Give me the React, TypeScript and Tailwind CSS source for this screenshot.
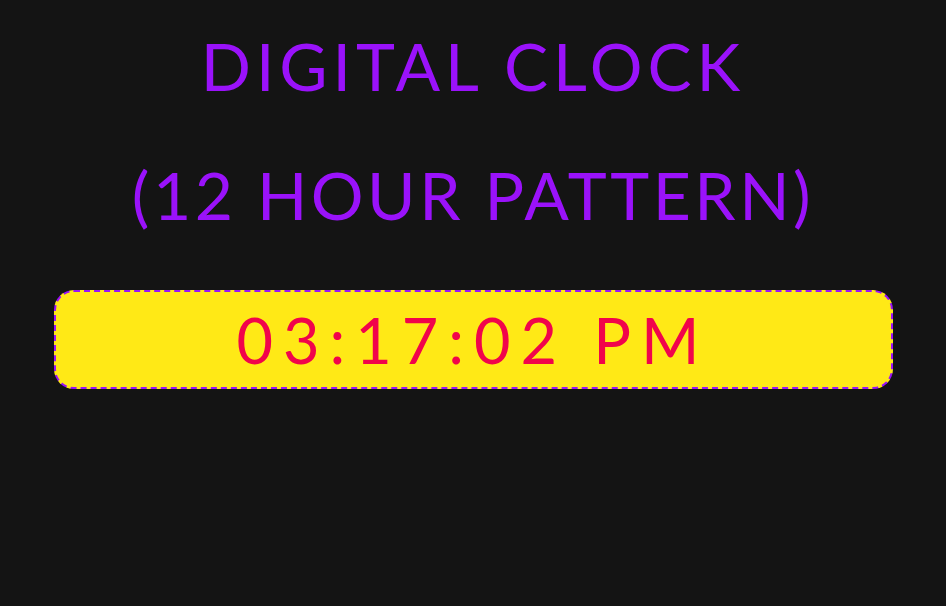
const App = () => {
  return (
    <div className="min-h-[606px] w-full bg-[#141414] flex flex-col items-center pt-px font-['Lato',sans-serif]">
      <h1 className="text-[#9a12fa] text-[66px] leading-[129px] text-center">
        <span className="block tracking-[5px]">DIGITAL CLOCK</span>
        <span className="block tracking-[3.5px]">(12 HOUR PATTERN)</span>
      </h1>
      <div className="mt-[31px] w-[839px] h-[99px] rounded-[20px] border-2 border-dashed border-[#9a12fa] bg-[#ffe916] flex items-center justify-center">
        <span className="text-[#f1044b] text-[63px] tracking-[10px] leading-none">03:17:02 PM</span>
      </div>
    </div>
  );
};

export default App;
